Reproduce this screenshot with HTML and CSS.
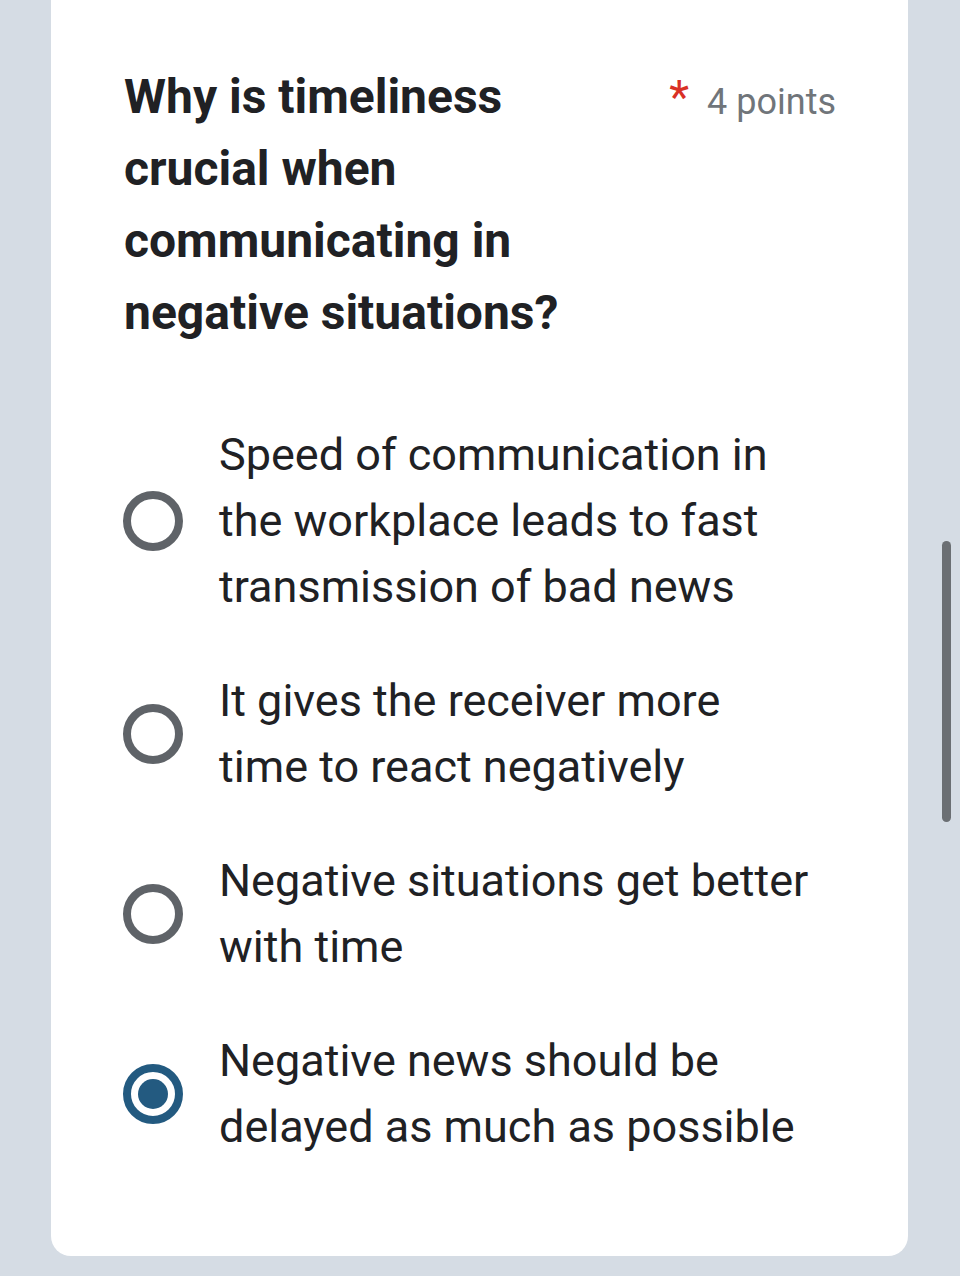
FILE: index.html
```html
<!DOCTYPE html>
<html>
<head>
<meta charset="utf-8">
<link rel="stylesheet" href="styles.css">
</head>
<body>
<div class="page">
  <div class="card">
    <div class="header">
      <div class="title">Why is timeliness crucial when communicating in negative situations?</div>
      <div class="meta"><span class="req">*</span><span class="points">4 points</span></div>
    </div>
    <div class="options">
      <div class="option">
        <span class="radio"></span>
        <span class="label">Speed of communication in the workplace leads to fast transmission of bad news</span>
      </div>
      <div class="option">
        <span class="radio"></span>
        <span class="label">It gives the receiver more time to react negatively</span>
      </div>
      <div class="option">
        <span class="radio"></span>
        <span class="label">Negative situations get better with time</span>
      </div>
      <div class="option">
        <span class="radio checked"></span>
        <span class="label">Negative news should be delayed as much as possible</span>
      </div>
    </div>
  </div>
  <div class="scrollbar"></div>
</div>
</body>
</html>
```

FILE: styles.css
```css
html, body {
  margin: 0;
  padding: 0;
  background: #d5dce4;
}
body {
  font-family: Roboto, "Noto Sans", sans-serif;
  width: 960px;
  height: 1276px;
  overflow: hidden;
}
.page {
  position: relative;
  display: flow-root;
  width: 960px;
  height: 1276px;
}
.card {
  margin: -20px 0 0 51px;
  width: 857px;
  height: 1276px;
  box-sizing: border-box;
  background: #ffffff;
  border-radius: 20px;
  padding: 81px 72px 0 73px;
}
.header {
  display: flex;
  justify-content: space-between;
  align-items: flex-start;
}
.title {
  width: 480px;
  font-size: 48px;
  font-weight: 700;
  line-height: 72px;
  color: #202124;
}
.meta {
  display: flex;
  align-items: flex-start;
  padding-top: 13px;
}
.req {
  color: #d93025;
  font-size: 46px;
  line-height: 46px;
  margin-right: 18px;
}
.points {
  color: #70757a;
  font-size: 36px;
  line-height: 40px;
  padding-top: 8px;
}
.options {
  margin-top: 73px;
  display: flex;
  flex-direction: column;
  gap: 48px;
}
.option {
  display: flex;
  align-items: center;
}
.radio {
  flex: none;
  width: 60px;
  height: 60px;
  box-sizing: border-box;
  border: 8px solid #5f6368;
  border-radius: 50%;
  margin-left: -1px;
  margin-right: 36px;
  position: relative;
}
.radio.checked {
  border-color: #235a80;
}
.radio.checked::after {
  content: "";
  position: absolute;
  left: 7px;
  top: 7px;
  width: 30px;
  height: 30px;
  border-radius: 50%;
  background: #235a80;
}
.label {
  font-size: 45px;
  line-height: 66px;
  color: #202124;
  width: 591px;
}
.scrollbar {
  position: absolute;
  left: 942px;
  top: 541px;
  width: 9px;
  height: 281px;
  border-radius: 5px;
  background: #6b6f73;
}
```
